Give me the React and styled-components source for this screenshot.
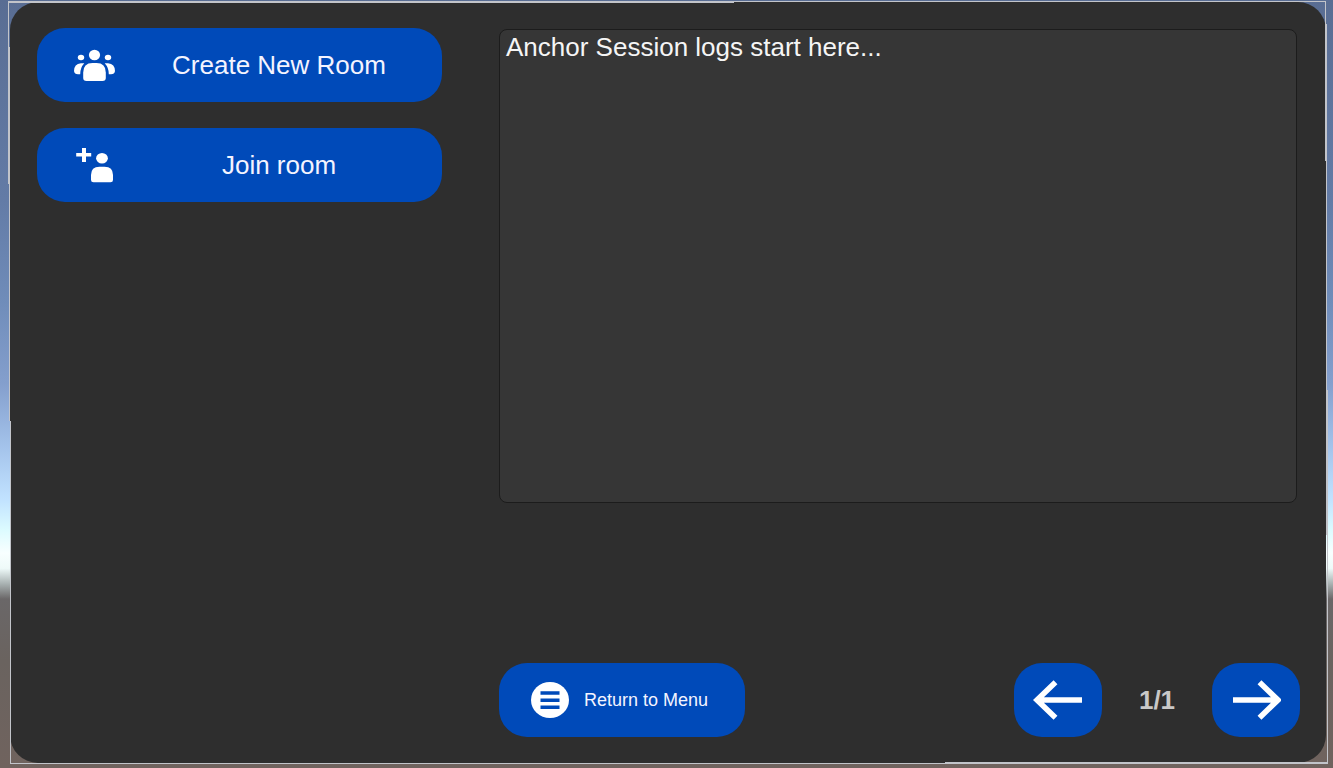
import React, { useState } from "react";
import styled, { createGlobalStyle } from "styled-components";

const blue = "#004ab9";
const line = "#c2c4ca";

const GlobalStyle = createGlobalStyle`
  * { box-sizing: border-box; }
  body {
    margin: 0;
    font-family: "Liberation Sans", Arial, sans-serif;
  }
`;

const Scene = styled.main`
  display: flex;
  min-height: 100vh;
  padding: 1px 5px 4px 8px;
  background: linear-gradient(
    to bottom,
    #596d93 0%,
    #637ba6 26%,
    #6f8cb9 39%,
    #849fcd 50%,
    #a3c2ea 58%,
    #c1e2ff 65%,
    #dcfbff 69%,
    #f8ffff 72%,
    #eefaf9 74%,
    #a9b2b2 76%,
    #6a6768 78%,
    #6a635f 86%,
    #70635e 100%
  );
`;

const Frame = styled.div`
  position: relative;
  display: flex;
  flex: 1;
  min-width: 0;
  padding: 1px 2px;

  &::after {
    content: "";
    position: absolute;
    inset: 0;
    pointer-events: none;
    background:
      linear-gradient(to bottom, ${line} 24%, transparent 24%) 0 0 / 1px 100% no-repeat,
      linear-gradient(to bottom, transparent 6%, ${line} 6% 55%, transparent 55%) 1px 0 / 1px 100% no-repeat,
      linear-gradient(to bottom, transparent 55%, ${line} 55%) 2px 0 / 1px 100% no-repeat,
      linear-gradient(to bottom, ${line} 21%, transparent 21%) right 2px top 0 / 1px 100% no-repeat,
      linear-gradient(to bottom, transparent 3%, ${line} 3% 70%, transparent 70%) right 1px top 0 / 1px 100% no-repeat,
      linear-gradient(to bottom, transparent 51%, ${line} 51%) right 0 top 0 / 1px 100% no-repeat,
      linear-gradient(${line}, ${line}) left 0 top 0 / calc(100% - 2px) 1px no-repeat,
      linear-gradient(${line}, ${line}) left 0 top 1px / 55% 1px no-repeat,
      linear-gradient(${line}, ${line}) right 0 bottom 0 / calc(100% - 2px) 1px no-repeat,
      linear-gradient(${line}, ${line}) right 0 bottom 1px / 29% 1px no-repeat;
  }
`;

const Panel = styled.section`
  display: grid;
  flex: 1;
  min-width: 0;
  grid-template-columns: minmax(0, 405fr) minmax(0, 801fr);
  column-gap: 57px;
  padding: 26px 26px 26px 27px;
  border-radius: 28px;
  background: #2e2e2e;
`;

const Actions = styled.nav`
  display: flex;
  flex-direction: column;
  gap: 26px;
`;

const Button = styled.button`
  display: flex;
  align-items: center;
  height: 74px;
  padding: 0;
  border: 0;
  border-radius: 28px;
  background: ${blue};
  color: #f4f4ff;
  font-family: inherit;
  cursor: pointer;
`;

const ActionButton = styled(Button)`
  padding-left: 36px;
  font-size: 26px;
`;

const ActionLabel = styled.span`
  flex: 1;
  text-align: center;
`;

const MenuButton = styled(Button)`
  width: 246px;
  padding-left: 31px;
  gap: 15px;
  font-size: 18px;
`;

const ArrowButton = styled(Button)`
  justify-content: center;
  width: 88px;
`;

const Session = styled.div`
  display: flex;
  flex-direction: column;
  justify-content: space-between;
  gap: 160px;
`;

const Log = styled.div`
  flex: 1;
  margin: 1px 3px 0 0;
  padding: 2px 6px;
  border: 1px solid #1c1c1c;
  border-radius: 8px;
  background: #363636;
  color: #f5f5f5;
  font-size: 26px;
  line-height: 30px;
`;

const Footer = styled.footer`
  display: flex;
  justify-content: space-between;
`;

const Pager = styled.div`
  display: flex;
  align-items: center;
`;

const PageCount = styled.span`
  width: 110px;
  color: #c8c8c8;
  font-size: 26px;
  font-weight: 700;
  text-align: center;
`;

const GroupIcon = () => (
  <svg width="43" height="36" viewBox="0 0 43 36" fill="#fff" aria-hidden="true">
    <ellipse cx="21.5" cy="8" rx="5.6" ry="5.3" />
    <ellipse cx="8" cy="10.5" rx="3.2" ry="2.8" />
    <ellipse cx="35" cy="10.5" rx="3.2" ry="2.8" />
    <path d="M10.200 27V25.500Q10.200 16 19.500 16H23.500Q32.800 16 32.800 25.500V31Q32.800 34 29.500 34H13.500Q10.200 34 10.200 31Z" />
    <path d="M11.300 16.200H8Q1 17 1 24Q1.500 27.200 5 27.200H7.200Q7.200 20.500 11.300 16.200Z" />
    <path d="M31.700 16.200H35Q42 17 42 24Q41.500 27.200 38 27.200H35.800Q35.800 20.500 31.700 16.200Z" />
  </svg>
);

const AddUserIcon = () => (
  <svg width="43" height="36" viewBox="0 0 43 36" fill="#fff" aria-hidden="true">
    <path d="M9 1H13V6H18.200V9.500H13V15H9V9.500H3.200V6H9Z" />
    <ellipse cx="29" cy="11.200" rx="5.900" ry="5.300" />
    <path d="M18 28Q18 19.700 26.500 19.700H31.500Q40 19.700 40 28V33Q40 35.300 37.500 35.300H20.500Q18 35.300 18 33Z" />
  </svg>
);

const MenuIcon = () => (
  <svg width="39" height="37" viewBox="0 0 39 37" aria-hidden="true">
    <ellipse cx="20" cy="18" rx="19" ry="18" fill="#fff" />
    <path d="M10.500 11H29.500M10.500 18.200H29.500M10.500 25.300H29.500" stroke={blue} strokeWidth="3.500" />
  </svg>
);

const ArrowIcon = ({ right }) => (
  <svg width="50" height="40" viewBox="0 0 50 40" fill="none" stroke="#fff" strokeWidth="5.600" aria-hidden="true">
    {right ? <path d="M2 20H47M28.500 2.300L47 20L28.500 37.700" /> : <path d="M49 20H4M22.500 2.300L4 20L22.500 37.700" />}
  </svg>
);

export default function App() {
  const [page, setPage] = useState(1);
  const pages = 1;
  return (
    <>
      <GlobalStyle />
      <Scene>
        <Frame>
          <Panel>
            <Actions>
              <ActionButton type="button">
                <GroupIcon />
                <ActionLabel>Create New Room</ActionLabel>
              </ActionButton>
              <ActionButton type="button">
                <AddUserIcon />
                <ActionLabel>Join room</ActionLabel>
              </ActionButton>
            </Actions>
            <Session>
              <Log role="log">Anchor Session logs start here...</Log>
              <Footer>
                <MenuButton type="button">
                  <MenuIcon />
                  Return to Menu
                </MenuButton>
                <Pager>
                  <ArrowButton type="button" aria-label="Previous page" onClick={() => setPage(Math.max(1, page - 1))}>
                    <ArrowIcon />
                  </ArrowButton>
                  <PageCount>{`${page}/${pages}`}</PageCount>
                  <ArrowButton type="button" aria-label="Next page" onClick={() => setPage(Math.min(pages, page + 1))}>
                    <ArrowIcon right />
                  </ArrowButton>
                </Pager>
              </Footer>
            </Session>
          </Panel>
        </Frame>
      </Scene>
    </>
  );
}
